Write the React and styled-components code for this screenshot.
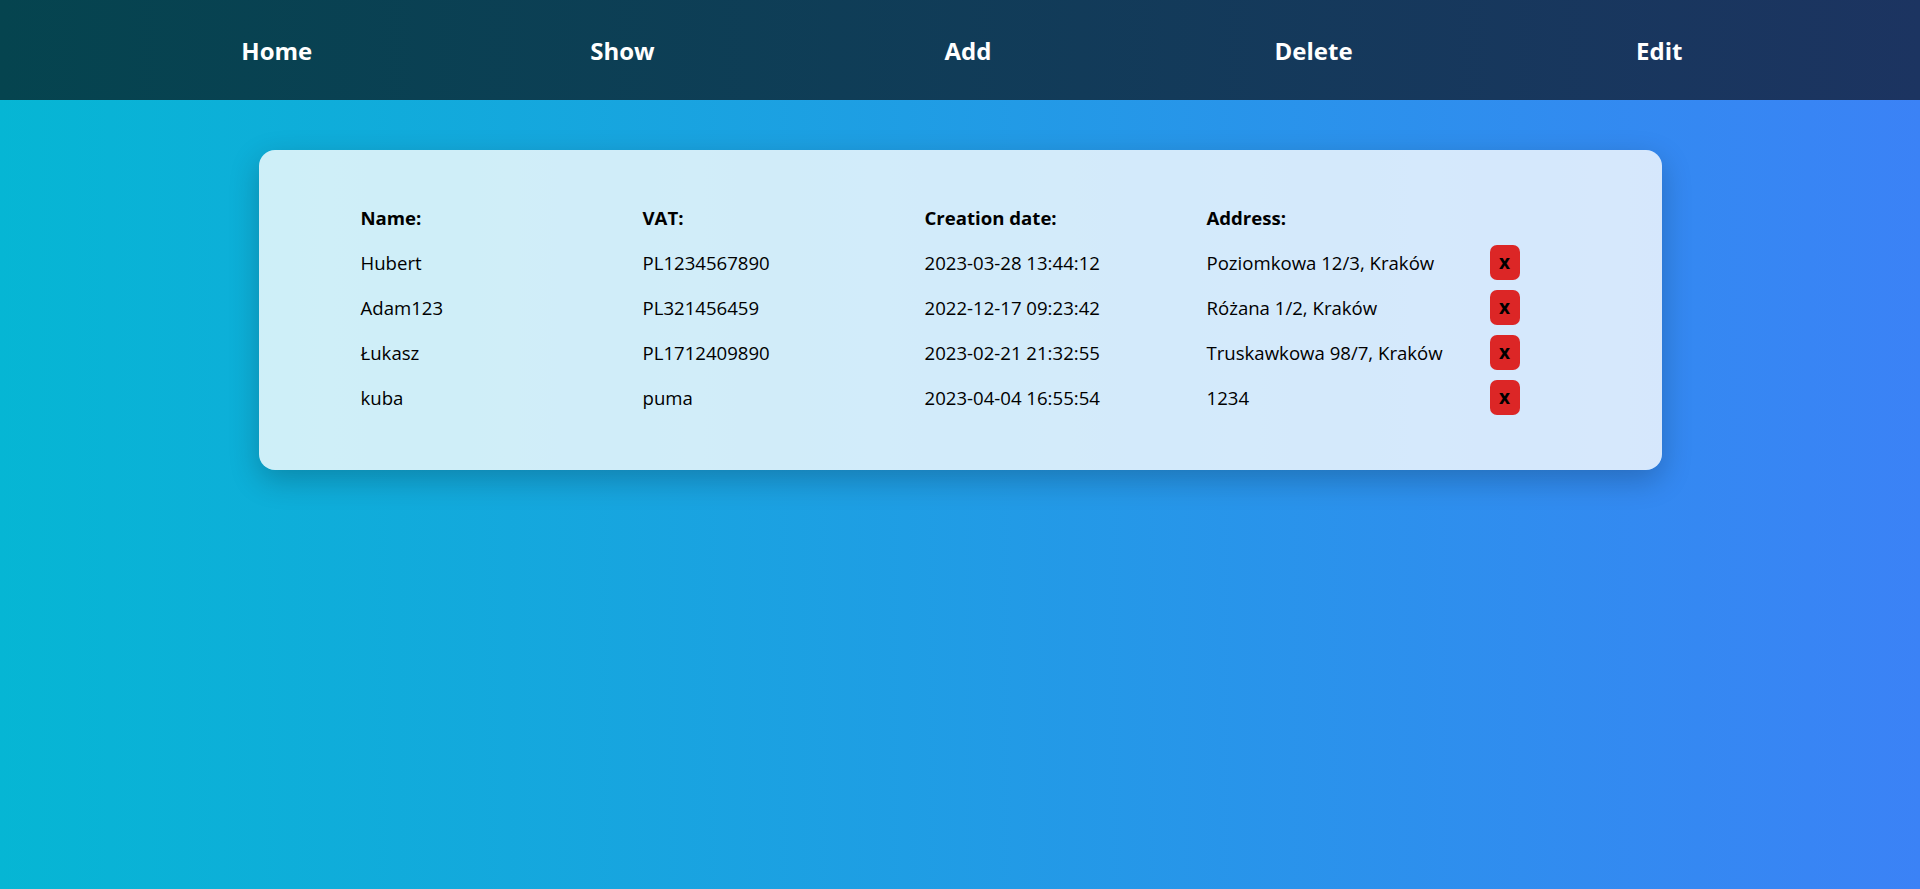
import React from "react";
import styled, { createGlobalStyle } from "styled-components";

const GlobalStyle = createGlobalStyle`
  * { box-sizing: border-box; }
  html, body { margin: 0; padding: 0; }
  body {
    font-family: "Open Sans", "Noto Sans", sans-serif;
    min-height: 100vh;
    background: linear-gradient(to right, #06b6d4, #3b82f6);
  }
`;

const Page = styled.div`
  min-height: 100vh;
  display: flex;
  flex-direction: column;
`;

const Nav = styled.nav`
  height: 100px;
  background: linear-gradient(to right, #05444f, #1c3461);
  display: grid;
  grid-template-columns: repeat(5, 1fr);
  align-items: center;
  padding: 0 88px 0 104px;
`;

const NavLink = styled.a`
  justify-self: center;
  color: #ffffff;
  font-weight: 700;
  font-size: 24px;
  text-decoration: none;
  cursor: pointer;
`;

const Main = styled.main`
  display: flex;
  justify-content: center;
  padding-top: 50px;
`;

const Card = styled.section`
  width: 1403px;
  background: rgba(255, 255, 255, 0.8);
  border-radius: 16px;
  box-shadow: 0 10px 30px rgba(0, 0, 0, 0.22);
  padding: 45px 103px 50px 102px;
`;

const Table = styled.table`
  width: 100%;
  border-collapse: collapse;
  table-layout: fixed;
`;

const Col = styled.col`
  width: ${(p) => p.$w};
`;

const Th = styled.th`
  text-align: left;
  font-weight: 700;
  font-size: 18.6px;
  color: #000;
  height: 45px;
  padding: 0;
`;

const Td = styled.td`
  font-size: 18.6px;
  color: #000;
  height: 45px;
  padding: 0;
  white-space: nowrap;
`;

const DeleteButton = styled.button`
  width: 30px;
  height: 35px;
  border: none;
  border-radius: 7px;
  background: #dc2626;
  color: #000;
  font-family: inherit;
  font-weight: 700;
  font-size: 19px;
  line-height: 1;
  padding: 0;
  display: flex;
  align-items: center;
  justify-content: center;
  cursor: pointer;
`;

const rows = [
  ["Hubert", "PL1234567890", "2023-03-28 13:44:12", "Poziomkowa 12/3, Kraków"],
  ["Adam123", "PL321456459", "2022-12-17 09:23:42", "Różana 1/2, Kraków"],
  ["Łukasz", "PL1712409890", "2023-02-21 21:32:55", "Truskawkowa 98/7, Kraków"],
  ["kuba", "puma", "2023-04-04 16:55:54", "1234"],
];

export default function App() {
  return (
    <Page>
      <GlobalStyle />
      <Nav>
        {["Home", "Show", "Add", "Delete", "Edit"].map((l) => (
          <NavLink key={l}>{l}</NavLink>
        ))}
      </Nav>
      <Main>
        <Card>
          <Table>
            <colgroup>
              <Col $w="282px" />
              <Col $w="282px" />
              <Col $w="282px" />
              <Col $w="283px" />
              <Col $w="auto" />
            </colgroup>
            <thead>
              <tr>
                <Th>Name:</Th>
                <Th>VAT:</Th>
                <Th>Creation date:</Th>
                <Th>Address:</Th>
                <Th />
              </tr>
            </thead>
            <tbody>
              {rows.map((r) => (
                <tr key={r[0]}>
                  {r.map((c, i) => (
                    <Td key={i}>{c}</Td>
                  ))}
                  <Td>
                    <DeleteButton>x</DeleteButton>
                  </Td>
                </tr>
              ))}
            </tbody>
          </Table>
        </Card>
      </Main>
    </Page>
  );
}
